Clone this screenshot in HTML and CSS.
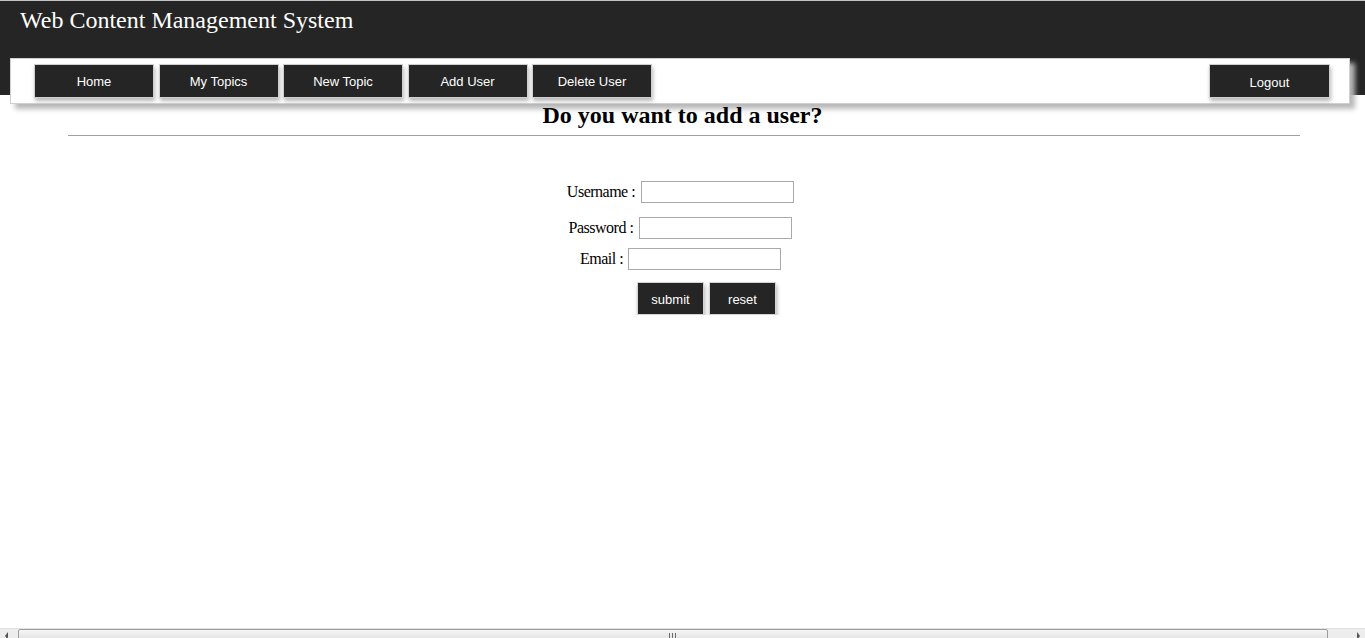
FILE: index.html
```html
<!DOCTYPE html>
<html>
<head>
<meta charset="utf-8">
<title>Add User</title>
<link rel="stylesheet" href="styles.css">
</head>
<body>
<header class="top">
  <h1 class="site-title">Web Content Management System</h1>
  <nav class="menu">
    <a class="menu-btn" href="#">Home</a>
    <a class="menu-btn" href="#">My Topics</a>
    <a class="menu-btn" href="#">New Topic</a>
    <a class="menu-btn" href="#">Add User</a>
    <a class="menu-btn" href="#">Delete User</a>
    <a class="menu-btn logout" href="#">Logout</a>
  </nav>
</header>
<main class="content">
  <h2 class="page-title">Do you want to add a user?</h2>
  <hr class="rule">
  <form class="user-form">
    <div class="row row-1"><label class="lbl">Username :</label><input class="field" type="text"></div>
    <div class="row row-2"><label class="lbl">Password :</label><input class="field" type="password"></div>
    <div class="row row-3"><label class="lbl">Email :</label><input class="field" type="text"></div>
    <div class="row actions"><button class="act-btn" type="button">submit</button><button class="act-btn" type="reset">reset</button></div>
  </form>
</main>
<div class="hscroll">
  <span class="arrow arrow-left"></span>
  <div class="thumb"><span class="grip"></span></div>
  <span class="arrow arrow-right"></span>
</div>
</body>
</html>
```
FILE: styles.css
```css
html, body {
  margin: 0;
  padding: 0;
  background: #ffffff;
}
body {
  font-family: "Liberation Serif", "Times New Roman", serif;
  color: #000;
  overflow: hidden;
}
.top {
  height: 89px;
  background: #252525;
  border-top: 1px solid #c4c4c4;
  padding-top: 5px;
}
.site-title {
  margin: 0;
  padding-left: 20px;
  font-family: "Liberation Serif", "Times New Roman", serif;
  font-weight: normal;
  font-size: 24px;
  line-height: 28px;
  color: #ffffff;
}
.menu {
  display: flex;
  gap: 4.5px;
  margin: 24px 15px 0 10px;
  padding: 5px 19px 5px 23px;
  background: #ffffff;
  border: 1px solid #d0d0d0;
  box-shadow: 5px 5px 5px #b8b8b8;
  position: relative;
}
.menu-btn {
  box-sizing: border-box;
  width: 120px;
  flex-shrink: 0;
  height: 34px;
  padding-top: 1px;
  line-height: 32px;
  text-align: center;
  background: #252525;
  color: #ffffff;
  border: 1px solid #cfcfcf;
  box-shadow: 1px 3px 4px rgba(0, 0, 0, 0.28);
  font-family: "Liberation Sans", Arial, sans-serif;
  font-size: 13px;
  text-decoration: none;
}
.logout {
  margin-left: auto;
  width: 121px;
  padding-top: 2px;
}
.content {
  padding-top: 6px;
}
.page-title {
  margin: 0;
  text-align: center;
  font-family: "Liberation Serif", "Times New Roman", serif;
  font-weight: bold;
  font-size: 24px;
  line-height: 28px;
  position: relative;
}
.rule {
  margin: 6px 65px 0 68px;
  height: 0;
  border: 0;
  border-top: 1px solid #a0a0a0;
}
.user-form {
  padding-top: 45px;
  padding-right: 4px;
}
.row {
  display: flex;
  justify-content: center;
  align-items: center;
  height: 22px;
}
.row-2 { margin-top: 14px; }
.row-3 { margin-top: 9px; }
.lbl {
  font-size: 16px;
  letter-spacing: -0.5px;
  margin-right: 6px;
}
.row-3 .lbl { margin-right: 5px; }
.field {
  box-sizing: border-box;
  width: 153px;
  min-width: 0;
  flex-shrink: 0;
  height: 22px;
  margin: 0;
  padding: 1px 2px;
  border: 1px solid #a9a9a9;
  background: #fff;
  font-family: "Liberation Sans", Arial, sans-serif;
  font-size: 13px;
}
.actions {
  margin-top: 12px;
  height: 33px;
  gap: 5px;
  padding-left: 52px;
}
.act-btn {
  box-sizing: border-box;
  width: 67px;
  flex-shrink: 0;
  height: 33px;
  margin: 0;
  padding: 2px 0 0;
  background: #252525;
  color: #ffffff;
  border: 1px solid #d4d4d4;
  box-shadow: 1px 3px 4px rgba(0, 0, 0, 0.3);
  font-family: "Liberation Sans", Arial, sans-serif;
  font-size: 13px;
}
.hscroll {
  position: fixed;
  left: 0;
  right: 0;
  bottom: 0;
  height: 9px;
  background: #ededed;
  border-top: 1px solid #e2e2e2;
  overflow: hidden;
}
.thumb {
  position: absolute;
  left: 18px;
  right: 37px;
  top: 0;
  height: 16px;
  box-sizing: border-box;
  border: 1px solid #9c9c9c;
  border-radius: 2px;
  background: linear-gradient(#f6f6f6, #e4e4e4 60%, #dadada);
}
.grip {
  position: absolute;
  left: 50%;
  top: 3px;
  width: 7px;
  height: 6px;
  margin-left: -4px;
  background: repeating-linear-gradient(90deg, #6a6a6a 0, #6a6a6a 1px, transparent 1px, transparent 3px);
}
.arrow {
  position: absolute;
  top: 3px;
  width: 0;
  height: 0;
  border-top: 4px solid transparent;
  border-bottom: 4px solid transparent;
}
.arrow-left {
  left: 5px;
  border-right: 3px solid #555;
}
.arrow-right {
  right: 5px;
  border-left: 3px solid #555;
}
```
